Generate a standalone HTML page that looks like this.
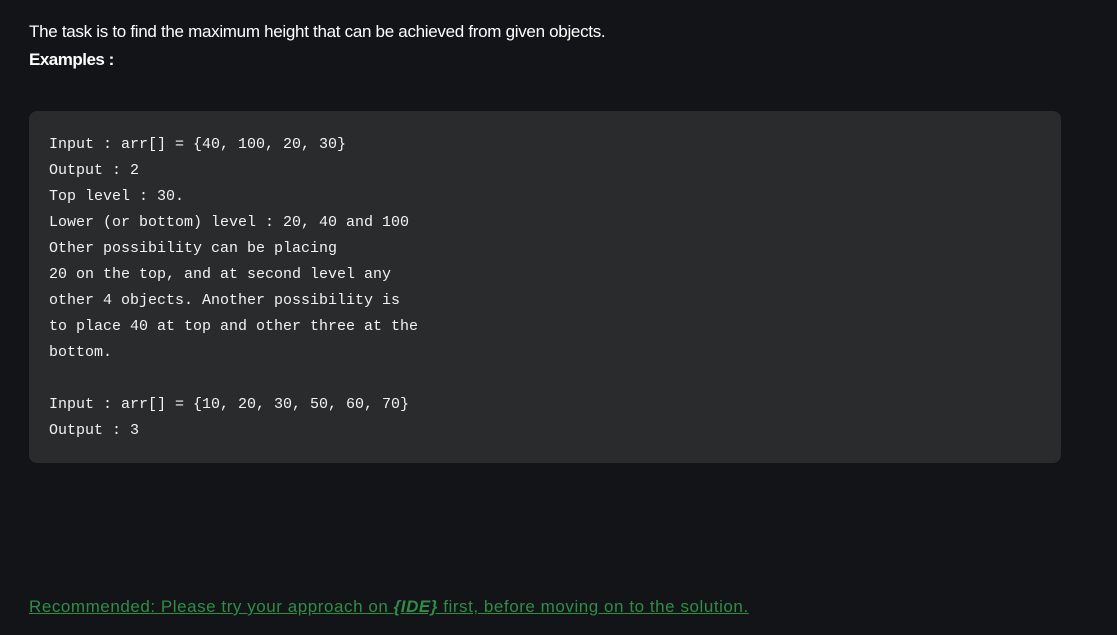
<!DOCTYPE html>
<html><head><style>
html,body{margin:0;padding:0;background:#131417;width:1117px;height:635px;overflow:hidden}
body{font-family:"Liberation Sans",sans-serif;color:#fff}
.t{position:absolute;left:29px;top:21px;font-size:17px;letter-spacing:-0.3px;line-height:22px}
.e{position:absolute;left:29px;top:49px;font-size:17px;font-weight:bold;letter-spacing:-0.5px;line-height:22px}
.code{position:absolute;left:29px;top:111px;width:1032px;height:352px;background:#2a2b2d;border-radius:8px}
pre{margin:0;position:absolute;left:20px;top:21px;font-family:"Liberation Mono",monospace;font-size:15px;line-height:26px;color:#f2f2f2}
.r{position:absolute;left:29px;top:596px;font-size:17px;letter-spacing:0.55px;color:#2f8d46;text-decoration:underline;line-height:22px}
.r b{font-style:italic}
</style></head><body>
<div class="t">The task is to find the maximum height that can be achieved from given objects.</div>
<div class="e">Examples :</div>
<div class="code"><pre>Input : arr[] = {40, 100, 20, 30}
Output : 2
Top level : 30.
Lower (or bottom) level : 20, 40 and 100
Other possibility can be placing
20 on the top, and at second level any
other 4 objects. Another possibility is
to place 40 at top and other three at the
bottom.

Input : arr[] = {10, 20, 30, 50, 60, 70}
Output : 3</pre></div>
<div class="r">Recommended: Please try your approach on <b>{IDE}</b> first, before moving on to the solution.</div>
</body></html>
